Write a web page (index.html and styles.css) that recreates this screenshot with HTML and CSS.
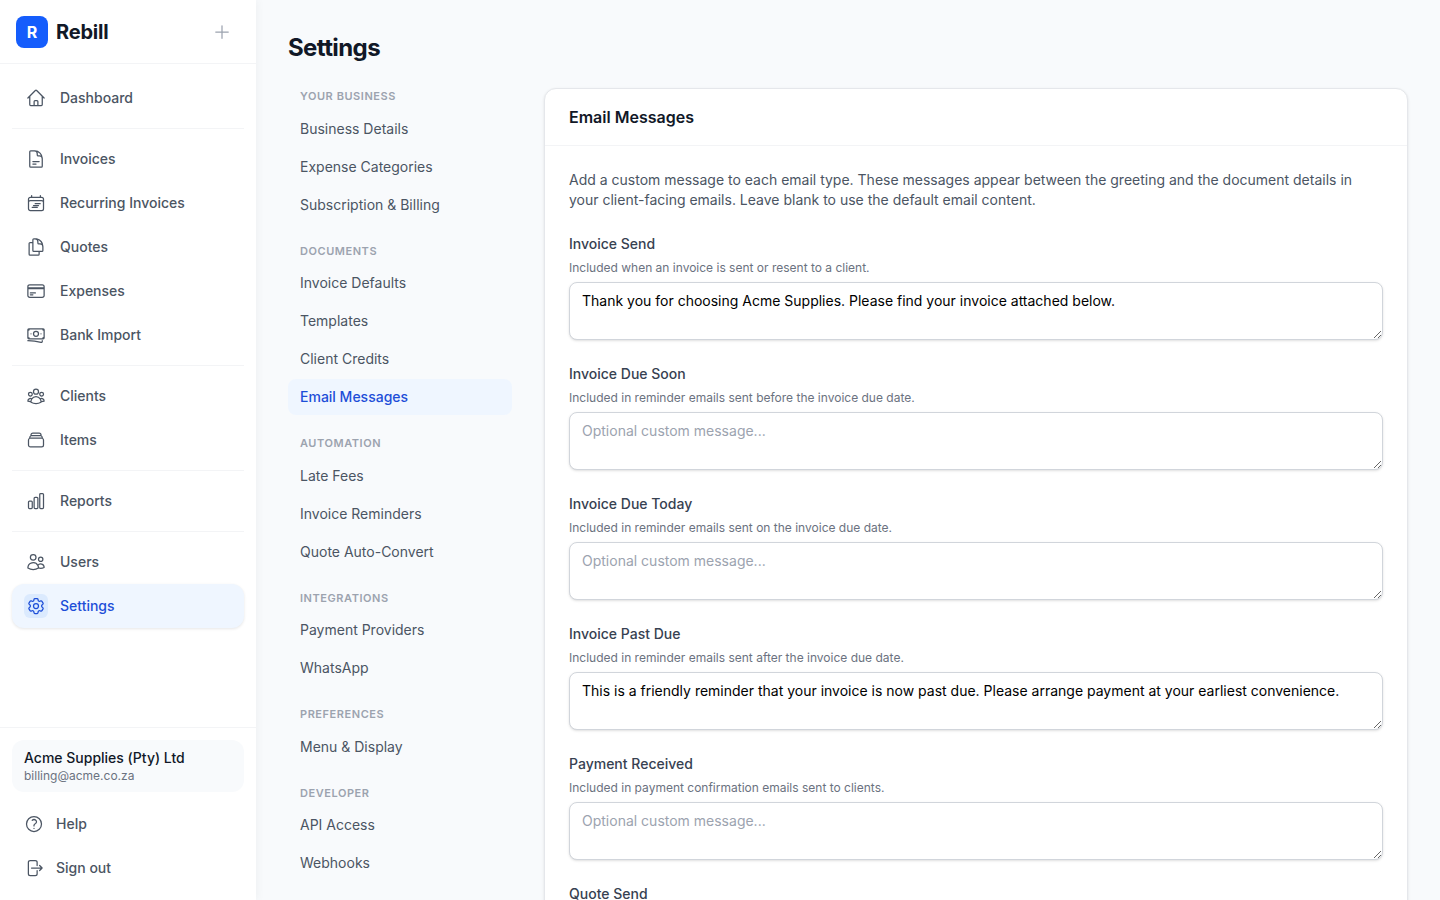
FILE: index.html
```html
<!DOCTYPE html>
<html>
<head>
  <title>Settings - Rebill</title>
  <link rel="stylesheet" href="styles.css">
</head>
<body>
  <div class="app">
    <aside class="sidebar">
      <div class="brand">
        <div class="brand-logo">R</div>
        <div class="brand-name">Rebill</div>
        <svg class="brand-plus" viewBox="0 0 24 24"><path d="M12 4.5v15m7.5-7.5h-15"/></svg>
      </div>

      <nav class="nav">
        <a class="nav-item" href="#">
          <span class="nav-icon"><svg viewBox="0 0 24 24"><path d="m2.25 12 8.954-8.955c.44-.439 1.152-.439 1.591 0L21.75 12M4.5 9.75v10.125c0 .621.504 1.125 1.125 1.125H9.75v-4.875c0-.621.504-1.125 1.125-1.125h2.25c.621 0 1.125.504 1.125 1.125V21h4.125c.621 0 1.125-.504 1.125-1.125V9.75M8.25 21h8.25"/></svg></span>
          Dashboard
        </a>
        <div class="nav-divider"></div>
        <a class="nav-item" href="#">
          <span class="nav-icon"><svg viewBox="0 0 24 24"><path d="M19.5 14.25v-2.625a3.375 3.375 0 0 0-3.375-3.375h-1.5A1.125 1.125 0 0 1 13.5 7.125v-1.5a3.375 3.375 0 0 0-3.375-3.375H8.25m0 12.75h7.5m-7.5 3H12M10.5 2.25H5.625c-.621 0-1.125.504-1.125 1.125v17.25c0 .621.504 1.125 1.125 1.125h12.75c.621 0 1.125-.504 1.125-1.125V11.25a9 9 0 0 0-9-9Z"/></svg></span>
          Invoices
        </a>
        <a class="nav-item" href="#">
          <span class="nav-icon"><svg viewBox="0 0 24 24"><path d="M6.75 3v2.25M17.25 3v2.25M3 18.75V7.5a2.25 2.25 0 0 1 2.25-2.25h13.5A2.25 2.25 0 0 1 21 7.5v11.25m-18 0A2.25 2.25 0 0 0 5.25 21h13.5A2.25 2.25 0 0 0 21 18.75m-18 0v-7.5A2.25 2.25 0 0 1 5.25 9h13.5A2.25 2.25 0 0 1 21 11.25v7.5M11 12.75h6M9 15h6M7.5 17.25h6"/></svg></span>
          Recurring Invoices
        </a>
        <a class="nav-item" href="#">
          <span class="nav-icon"><svg viewBox="0 0 24 24"><path d="M15.75 17.25v3.375c0 .621-.504 1.125-1.125 1.125h-9.75a1.125 1.125 0 0 1-1.125-1.125V7.875c0-.621.504-1.125 1.125-1.125H6.75a9.06 9.06 0 0 1 1.5.124m7.5 10.376h3.375c.621 0 1.125-.504 1.125-1.125V11.25c0-4.46-3.243-8.161-7.5-8.876a9.06 9.06 0 0 0-1.5-.124H9.375c-.621 0-1.125.504-1.125 1.125v3.5m7.5 10.375H9.375a1.125 1.125 0 0 1-1.125-1.125v-9.25m12 6.625v-1.875a3.375 3.375 0 0 0-3.375-3.375h-1.5a1.125 1.125 0 0 1-1.125-1.125v-1.5a3.375 3.375 0 0 0-3.375-3.375H9.75"/></svg></span>
          Quotes
        </a>
        <a class="nav-item" href="#">
          <span class="nav-icon"><svg viewBox="0 0 24 24"><path d="M2.25 8.25h19.5M2.25 9h19.5m-16.5 5.25h6m-6 2.25h3m-3.75 3h15a2.25 2.25 0 0 0 2.25-2.25V6.75A2.25 2.25 0 0 0 19.5 4.5h-15a2.25 2.25 0 0 0-2.25 2.25v10.5A2.25 2.25 0 0 0 4.5 19.5Z"/></svg></span>
          Expenses
        </a>
        <a class="nav-item" href="#">
          <span class="nav-icon"><svg viewBox="0 0 24 24"><path d="M2.25 18.75a60.07 60.07 0 0 1 15.797 2.101c.727.198 1.453-.342 1.453-1.096V18.75M3.75 4.5v.75A.75.75 0 0 1 3 6h-.75m0 0v-.375c0-.621.504-1.125 1.125-1.125H20.25M2.25 6v9m18-10.5v.75c0 .414.336.75.75.75h.75m-1.5-1.5h.375c.621 0 1.125.504 1.125 1.125v9.75c0 .621-.504 1.125-1.125 1.125h-.375m1.5-1.5H21a.75.75 0 0 0-.75.75v.75m0 0H3.75m0 0h-.375a1.125 1.125 0 0 1-1.125-1.125V15m1.5 1.5v-.75A.75.75 0 0 0 3 15h-.75M15 10.5a3 3 0 1 1-6 0 3 3 0 0 1 6 0Zm3 0h.008v.008H18V10.5Zm-12 0h.008v.008H6V10.5Z"/></svg></span>
          Bank Import
        </a>
        <div class="nav-divider"></div>
        <a class="nav-item" href="#">
          <span class="nav-icon"><svg viewBox="0 0 24 24"><path d="M18 18.72a9.094 9.094 0 0 0 3.741-.479 3 3 0 0 0-4.682-2.72m.94 3.198.001.031c0 .225-.012.447-.037.666A11.944 11.944 0 0 1 12 21c-2.17 0-4.207-.576-5.963-1.584A6.062 6.062 0 0 1 6 18.719m12 0a5.971 5.971 0 0 0-.941-3.197m0 0A5.995 5.995 0 0 0 12 12.75a5.995 5.995 0 0 0-5.058 2.772m0 0a3 3 0 0 0-4.681 2.72 8.986 8.986 0 0 0 3.74.477m.94-3.197a5.971 5.971 0 0 0-.94 3.197M15 6.75a3 3 0 1 1-6 0 3 3 0 0 1 6 0Zm6 3a2.25 2.25 0 1 1-4.5 0 2.25 2.25 0 0 1 4.5 0Zm-13.5 0a2.25 2.25 0 1 1-4.5 0 2.25 2.25 0 0 1 4.5 0Z"/></svg></span>
          Clients
        </a>
        <a class="nav-item" href="#">
          <span class="nav-icon"><svg viewBox="0 0 24 24"><path d="M6 6.878V6a2.25 2.25 0 0 1 2.25-2.25h7.5A2.25 2.25 0 0 1 18 6v.878m-12 0c.235-.083.487-.128.75-.128h10.5c.263 0 .515.045.75.128m-12 0A2.25 2.25 0 0 0 4.5 9v.878m13.5-3A2.25 2.25 0 0 1 19.5 9v.878m0 0a2.246 2.246 0 0 0-.75-.128H5.25c-.263 0-.515.045-.75.128m15 0A2.25 2.25 0 0 1 21 12v6a2.25 2.25 0 0 1-2.25 2.25H5.25A2.25 2.25 0 0 1 3 18v-6c0-.98.626-1.813 1.5-2.122"/></svg></span>
          Items
        </a>
        <div class="nav-divider"></div>
        <a class="nav-item" href="#">
          <span class="nav-icon"><svg viewBox="0 0 24 24"><path d="M3 13.125C3 12.504 3.504 12 4.125 12h2.25c.621 0 1.125.504 1.125 1.125v6.75C7.5 20.496 6.996 21 6.375 21h-2.25A1.125 1.125 0 0 1 3 19.875v-6.75ZM9.75 8.625c0-.621.504-1.125 1.125-1.125h2.25c.621 0 1.125.504 1.125 1.125v11.25c0 .621-.504 1.125-1.125 1.125h-2.25a1.125 1.125 0 0 1-1.125-1.125V8.625ZM16.5 4.125c0-.621.504-1.125 1.125-1.125h2.25C20.496 3 21 3.504 21 4.125v15.75c0 .621-.504 1.125-1.125 1.125h-2.25a1.125 1.125 0 0 1-1.125-1.125V4.125Z"/></svg></span>
          Reports
        </a>
        <div class="nav-divider"></div>
        <a class="nav-item" href="#">
          <span class="nav-icon"><svg viewBox="0 0 24 24"><path d="M15 19.128a9.38 9.38 0 0 0 2.625.372 9.337 9.337 0 0 0 4.121-.952 4.125 4.125 0 0 0-7.533-2.493M15 19.128v-.003c0-1.113-.285-2.16-.786-3.07M15 19.128v.106A12.318 12.318 0 0 1 8.624 21c-2.331 0-4.512-.645-6.374-1.766l-.001-.109a6.375 6.375 0 0 1 11.964-3.07M12 6.375a3.375 3.375 0 1 1-6.75 0 3.375 3.375 0 0 1 6.75 0Zm8.25 2.25a2.625 2.625 0 1 1-5.25 0 2.625 2.625 0 0 1 5.25 0Z"/></svg></span>
          Users
        </a>
        <a class="nav-item active" href="#">
          <span class="nav-icon"><svg viewBox="0 0 24 24"><path d="M9.594 3.94c.09-.542.56-.94 1.11-.94h2.593c.55 0 1.02.398 1.11.94l.213 1.281c.063.374.313.686.645.87.074.04.147.083.22.127.325.196.72.257 1.075.124l1.217-.456a1.125 1.125 0 0 1 1.37.49l1.296 2.247a1.125 1.125 0 0 1-.26 1.431l-1.003.827c-.293.241-.438.613-.43.992a7.723 7.723 0 0 1 0 .255c-.008.378.137.75.43.991l1.004.827c.424.35.534.955.26 1.43l-1.298 2.247a1.125 1.125 0 0 1-1.369.491l-1.217-.456c-.355-.133-.75-.072-1.076.124a6.47 6.47 0 0 1-.22.128c-.331.183-.581.495-.644.869l-.213 1.281c-.09.543-.56.94-1.11.94h-2.594c-.55 0-1.019-.398-1.11-.94l-.213-1.281c-.062-.374-.312-.686-.644-.87a6.52 6.52 0 0 1-.22-.127c-.325-.196-.72-.257-1.076-.124l-1.217.456a1.125 1.125 0 0 1-1.369-.49l-1.297-2.247a1.125 1.125 0 0 1 .26-1.431l1.004-.827c.292-.24.437-.613.43-.991a6.932 6.932 0 0 1 0-.255c.007-.38-.138-.751-.43-.992l-1.004-.827a1.125 1.125 0 0 1-.26-1.43l1.297-2.247a1.125 1.125 0 0 1 1.37-.491l1.216.456c.356.133.751.072 1.076-.124.072-.044.146-.086.22-.128.332-.183.582-.495.644-.869l.214-1.28Z"/><path d="M15 12a3 3 0 1 1-6 0 3 3 0 0 1 6 0Z"/></svg></span>
          Settings
        </a>
      </nav>

      <div class="side-footer">
        <div class="account">
          <div class="account-name">Acme Supplies (Pty) Ltd</div>
          <div class="account-email">billing@acme.co.za</div>
        </div>
        <a class="foot-item" href="#">
          <svg viewBox="0 0 24 24"><path d="M9.879 7.519c1.171-1.025 3.071-1.025 4.242 0 1.172 1.025 1.172 2.687 0 3.712-.203.179-.43.326-.67.442-.745.361-1.45.999-1.45 1.827v.75M21 12a9 9 0 1 1-18 0 9 9 0 0 1 18 0Zm-9 5.25h.008v.008H12v-.008Z"/></svg>
          Help
        </a>
        <a class="foot-item" href="#">
          <svg viewBox="0 0 24 24"><path d="M15.75 9V5.25A2.25 2.25 0 0 0 13.5 3h-6a2.25 2.25 0 0 0-2.25 2.25v13.5A2.25 2.25 0 0 0 7.5 21h6a2.25 2.25 0 0 0 2.25-2.25V15m3 0 3-3m0 0-3-3m3 3H9"/></svg>
          Sign out
        </a>
      </div>
    </aside>

    <main class="content">
      <h1 class="page-title">Settings</h1>
      <div class="settings">
        <div class="subnav">
          <div class="subnav-group">
            <div class="subnav-label">YOUR BUSINESS</div>
            <a class="subnav-item" href="#">Business Details</a>
            <a class="subnav-item" href="#">Expense Categories</a>
            <a class="subnav-item" href="#">Subscription &amp; Billing</a>
          </div>
          <div class="subnav-group">
            <div class="subnav-label">DOCUMENTS</div>
            <a class="subnav-item" href="#">Invoice Defaults</a>
            <a class="subnav-item" href="#">Templates</a>
            <a class="subnav-item" href="#">Client Credits</a>
            <a class="subnav-item active" href="#">Email Messages</a>
          </div>
          <div class="subnav-group">
            <div class="subnav-label">AUTOMATION</div>
            <a class="subnav-item" href="#">Late Fees</a>
            <a class="subnav-item" href="#">Invoice Reminders</a>
            <a class="subnav-item" href="#">Quote Auto-Convert</a>
          </div>
          <div class="subnav-group">
            <div class="subnav-label">INTEGRATIONS</div>
            <a class="subnav-item" href="#">Payment Providers</a>
            <a class="subnav-item" href="#">WhatsApp</a>
          </div>
          <div class="subnav-group">
            <div class="subnav-label">PREFERENCES</div>
            <a class="subnav-item" href="#">Menu &amp; Display</a>
          </div>
          <div class="subnav-group">
            <div class="subnav-label">DEVELOPER</div>
            <a class="subnav-item" href="#">API Access</a>
            <a class="subnav-item" href="#">Webhooks</a>
          </div>
        </div>

        <section class="card">
          <div class="card-head">Email Messages</div>
          <div class="card-body">
            <p class="intro">Add a custom message to each email type. These messages appear between the greeting and the document details in your client-facing emails. Leave blank to use the default email content.</p>

            <div class="field">
              <label class="field-label">Invoice Send</label>
              <div class="field-hint">Included when an invoice is sent or resent to a client.</div>
              <textarea rows="2" placeholder="Optional custom message...">Thank you for choosing Acme Supplies. Please find your invoice attached below.</textarea>
            </div>
            <div class="field">
              <label class="field-label">Invoice Due Soon</label>
              <div class="field-hint">Included in reminder emails sent before the invoice due date.</div>
              <textarea rows="2" placeholder="Optional custom message..."></textarea>
            </div>
            <div class="field">
              <label class="field-label">Invoice Due Today</label>
              <div class="field-hint">Included in reminder emails sent on the invoice due date.</div>
              <textarea rows="2" placeholder="Optional custom message..."></textarea>
            </div>
            <div class="field">
              <label class="field-label">Invoice Past Due</label>
              <div class="field-hint">Included in reminder emails sent after the invoice due date.</div>
              <textarea rows="2" placeholder="Optional custom message...">This is a friendly reminder that your invoice is now past due. Please arrange payment at your earliest convenience.</textarea>
            </div>
            <div class="field">
              <label class="field-label">Payment Received</label>
              <div class="field-hint">Included in payment confirmation emails sent to clients.</div>
              <textarea rows="2" placeholder="Optional custom message..."></textarea>
            </div>
            <div class="field">
              <label class="field-label">Quote Send</label>
            </div>
          </div>
        </section>
      </div>
    </main>
  </div>
</body>
</html>
```

FILE: styles.css
```css
* {
  box-sizing: border-box;
}

html,
body {
  height: 100%;
  margin: 0;
  overflow: hidden;
}

body {
  font-family: Inter, "Liberation Sans", sans-serif;
  font-size: 14px;
  line-height: 20px;
  color: #111827;
  background-color: #f8fafc;
}

a {
  color: inherit;
  text-decoration: none;
}

svg {
  fill: none;
  stroke: currentColor;
  stroke-width: 1.5;
  stroke-linecap: round;
  stroke-linejoin: round;
}

.app {
  display: flex;
  height: 100vh;
}

/* sidebar */
.sidebar {
  display: flex;
  flex-direction: column;
  width: 256px;
  flex-shrink: 0;
  background-color: #fff;
  box-shadow: 2px 0 8px rgba(0, 0, 0, 0.04);
}

.brand {
  display: flex;
  align-items: center;
  height: 64px;
  padding: 0 24px 0 16px;
  border-bottom: 1px solid #f3f4f6;
}

.brand-logo {
  width: 32px;
  height: 32px;
  border-radius: 8px;
  background-color: #155dfc;
  color: #fff;
  font-size: 16px;
  font-weight: 700;
  line-height: 32px;
  text-align: center;
}

.brand-name {
  flex: 1;
  margin-left: 8px;
  font-size: 20px;
  font-weight: 700;
  letter-spacing: -0.2px;
  line-height: 28px;
}

.brand-plus {
  width: 20px;
  height: 20px;
  color: #9ca3af;
}

.nav {
  flex: 1;
  padding: 12px 12px 0;
}

.nav-item {
  display: flex;
  align-items: center;
  gap: 12px;
  height: 44px;
  padding: 0 12px;
  border-radius: 12px;
  color: #4b5563;
  font-weight: 500;
}

.nav-icon {
  display: flex;
  align-items: center;
  justify-content: center;
  width: 24px;
  height: 24px;
  border-radius: 6px;
}

.nav-icon svg {
  width: 20px;
  height: 20px;
}

.nav-item.active {
  background-color: #eff6ff;
  color: #1d4ed8;
  box-shadow: 0 1px 3px rgba(0, 0, 0, 0.1);
}

.nav-item.active .nav-icon {
  background-color: #dbeafe;
}

.nav-divider {
  height: 1px;
  margin: 8px 0;
  background-color: #f3f4f6;
}

.side-footer {
  padding: 12px 12px 10px;
  border-top: 1px solid #f3f4f6;
}

.account {
  margin-bottom: 10px;
  padding: 8px 12px;
  border-radius: 12px;
  background-color: #f8fafc;
}

.account-name {
  font-weight: 500;
}

.account-email {
  font-size: 12px;
  line-height: 16px;
  color: #6b7280;
}

.foot-item {
  display: flex;
  align-items: center;
  gap: 12px;
  height: 44px;
  padding: 0 12px;
  color: #4b5563;
  font-weight: 500;
}

.foot-item svg {
  width: 20px;
  height: 20px;
}

/* main area */
.content {
  flex: 1;
  min-width: 0;
  padding: 32px;
  overflow: hidden;
}

.page-title {
  margin: 0 0 24px;
  font-size: 24px;
  font-weight: 700;
  letter-spacing: -0.6px;
  line-height: 32px;
}

.settings {
  display: flex;
  align-items: flex-start;
  gap: 32px;
}

.subnav {
  display: flex;
  flex-direction: column;
  gap: 20px;
  width: 224px;
  flex-shrink: 0;
}

.subnav-group {
  display: flex;
  flex-direction: column;
  gap: 2px;
}

.subnav-label {
  margin-bottom: 4px;
  padding: 0 12px;
  font-size: 11px;
  font-weight: 600;
  letter-spacing: 0.55px;
  line-height: 16.5px;
  color: #9ca3af;
}

.subnav-item {
  height: 36px;
  padding: 8px 12px;
  border-radius: 8px;
  color: #4b5563;
}

.subnav-item.active {
  background-color: #eff6ff;
  color: #1d4ed8;
  font-weight: 500;
}

.card {
  flex: 1;
  min-width: 0;
  border: 1px solid #e5e7eb;
  border-radius: 12px;
  background-color: #fff;
  box-shadow: 0 1px 3px rgba(0, 0, 0, 0.1);
}

.card-head {
  padding: 16px 24px;
  border-bottom: 1px solid #f3f4f6;
  font-size: 16px;
  font-weight: 600;
  line-height: 24px;
}

.card-body {
  padding: 24px;
}

.intro {
  margin: 0 0 24px;
  color: #4b5563;
}

.field {
  margin-bottom: 24px;
}

.field-label {
  display: block;
  margin-bottom: 6px;
  font-weight: 500;
  color: #374151;
}

.field-hint {
  margin-bottom: 6px;
  font-size: 12px;
  line-height: 16px;
  color: #6b7280;
}

textarea {
  display: block;
  width: 100%;
  padding: 8px 12px;
  border: 1px solid #d1d5db;
  border-radius: 8px;
  background-color: #fff;
  box-shadow: 0 1px 3px rgba(0, 0, 0, 0.1), 0 1px 2px -1px rgba(0, 0, 0, 0.1);
  font-family: inherit;
  font-size: 14px;
  line-height: 20px;
  color: #000;
}

textarea::placeholder {
  color: #9ca3af;
}
```
